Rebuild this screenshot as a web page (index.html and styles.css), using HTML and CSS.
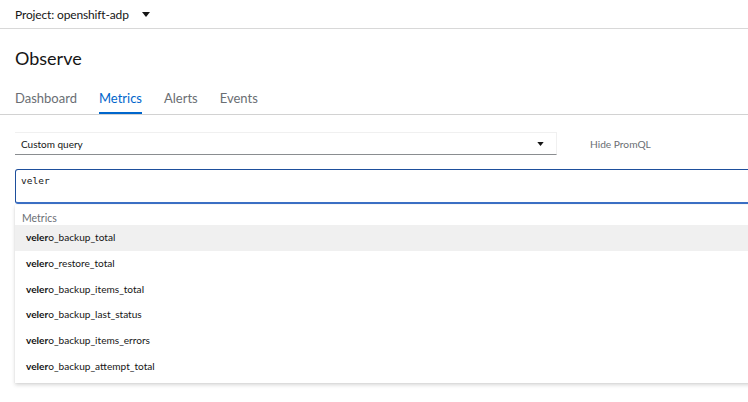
FILE: index.html
```html
<!DOCTYPE html>
<html>
<head>
<meta charset="utf-8">
<link rel="stylesheet" href="styles.css">
</head>
<body>
<div class="masthead">
  <span class="project">Project: openshift-adp</span>
  <svg class="caret" width="8" height="5" viewBox="0 0 8 5"><path d="M0 0h8L4 5z" fill="#151515"/></svg>
</div>
<h1 class="title">Observe</h1>
<nav class="tabs">
  <span class="tab">Dashboard</span>
  <span class="tab active">Metrics</span>
  <span class="tab">Alerts</span>
  <span class="tab">Events</span>
</nav>
<main class="content">
  <div class="query-row">
    <div class="select">
      <span>Custom query</span>
      <svg width="7" height="4" viewBox="0 0 8 5"><path d="M0 0h8L4 5z" fill="#151515"/></svg>
    </div>
    <span class="hide-link">Hide PromQL</span>
  </div>
  <div class="editor">
    <div class="input">veler</div>
    <div class="menu">
      <div class="group">Metrics</div>
      <div class="item hover"><b>veler</b>o_backup_total</div>
      <div class="item"><b>veler</b>o_restore_total</div>
      <div class="item"><b>veler</b>o_backup_items_total</div>
      <div class="item"><b>veler</b>o_backup_last_status</div>
      <div class="item"><b>veler</b>o_backup_items_errors</div>
      <div class="item"><b>veler</b>o_backup_attempt_total</div>
    </div>
  </div>
</main>
</body>
</html>
```
FILE: styles.css
```css
html, body {
  margin: 0;
  padding: 0;
  background: #fff;
  overflow: hidden;
}
body {
  font-family: "Lato", "Open Sans", sans-serif;
  color: #151515;
  width: 748px;
  height: 402px;
}
.masthead {
  height: 29px;
  border-bottom: 1px solid #d8d8d8;
  display: flex;
  align-items: center;
  padding-left: 15px;
  gap: 13px;
  box-sizing: border-box;
}
.project {
  font-size: 12px;
  letter-spacing: -0.15px;
  color: #151515;
}
.caret { margin-top: 1px; }
.title {
  margin: 0;
  padding: 17px 0 0 15px;
  font-size: 18px;
  font-weight: 400;
  line-height: 24px;
  height: 24px;
}
.tabs {
  margin-top: 14px;
  display: flex;
  gap: 22px;
  padding-left: 15px;
  border-bottom: 1px solid #d2d2d2;
  height: 30px;
}
.tab {
  font-size: 13px;
  color: #6a6e73;
  line-height: 28px;
  height: 28px;
  border-bottom: 2px solid transparent;
}
.tab.active {
  color: #0066cc;
  border-bottom-color: #0066cc;
}
.content {
  padding: 17px 0 0 15px;
}
.query-row {
  display: flex;
  align-items: center;
  height: 23px;
}
.select {
  width: 542px;
  height: 23px;
  box-sizing: border-box;
  border-top: 1px solid #f0f0f0;
  border-right: 1px solid #f0f0f0;
  border-bottom: 1px solid #8a8d90;
  display: flex;
  align-items: center;
  justify-content: space-between;
  padding: 0 12px 0 6px;
  font-size: 10px;
}
.hide-link {
  margin-left: 33px;
  font-size: 10.2px;
  color: #6a6e73;
}
.editor {
  margin-top: 14px;
  width: 760px;
}
.input {
  height: 35px;
  box-sizing: border-box;
  border: 1px solid #1e4f9c;
  border-bottom: 2px solid #3b6fc4;
  border-radius: 3px;
  padding: 5px 5px;
  font-family: "DejaVu Sans Mono", "Liberation Mono", monospace;
  font-size: 9.5px;
  color: #151515;
}
.menu {
  margin-top: 1px;
  background: #fff;
  box-shadow: 0 2px 4px rgba(3, 3, 3, 0.16), 0 0 1px rgba(3,3,3,0.1);
  padding: 8px 0 3px;
}
.group {
  font-size: 10.5px;
  color: #6a6e73;
  padding-left: 7px;
  height: 11px;
  line-height: 11px;
}
.item {
  font-size: 10.1px;
  height: 25.8px;
  line-height: 25.8px;
  padding-left: 11px;
  color: #151515;
}
.item b { font-weight: 700; }
.item.hover {
  background: #f0f0f0;
  margin-top: 1px;
}
```
